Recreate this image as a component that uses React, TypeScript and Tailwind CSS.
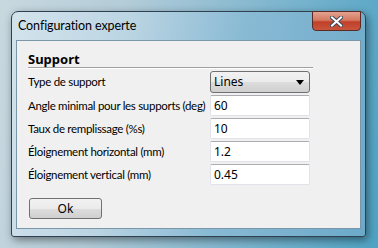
import React from "react";

const font = { fontFamily: '"Noto Sans", "Segoe UI", sans-serif' };
const labelFont = { fontFamily: 'Lato, "Noto Sans", sans-serif' };

function Field({ value }: { value: string }) {
  return (
    <div className="h-[21px] w-[100px] rounded-[2px] border border-[#e2e3ea] border-t-[#abadb3] bg-white pl-[3px] text-[12px] leading-[19px] text-black">
      {value}
    </div>
  );
}

export default function App() {
  const rows: [string, string][] = [
    ["Angle minimal pour les supports (deg)", "60"],
    ["Taux de remplissage (%s)", "10"],
    ["Éloignement horizontal (mm)", "1.2"],
    ["Éloignement vertical (mm)", "0.45"],
  ];
  return (
    <div
      className="h-[248px] w-[378px] overflow-hidden bg-[linear-gradient(100deg,#c9d8df_0%,#b3ccd8_30%,#7fb6cf_65%,#4fa3c4_100%)] pl-[11px] pt-[11px]"
      style={font}
    >
      <div className="relative flex h-[226px] w-[355px] flex-col rounded-t-[7px] rounded-b-[3px] border border-[#2f4150] bg-[linear-gradient(100deg,#d3e3ec_0%,#bcd5e3_30%,#89bad4_60%,#6ca9c9_100%)] px-[4px] pb-[7px] shadow-[2px_3px_8px_rgba(0,0,0,0.45)]">
        <div className="flex h-[28px] items-center pl-[2px] text-[12.5px] tracking-[-0.1px] text-black" style={labelFont}>
          Configuration experte
        </div>
        <div className="absolute right-[4px] top-[-1px] flex h-[20px] w-[49px] items-center justify-center rounded-b-[4px] border border-[#5a2a24] bg-[linear-gradient(180deg,#e3a190_0%,#d47a62_45%,#c2402a_55%,#c8553c_100%)]">
          <svg width="13" height="11" viewBox="0 0 13 11">
            <path
              d="M2 1.5 L11 9.5 M11 1.5 L2 9.5"
              stroke="#3b4a5c"
              strokeWidth="4"
              strokeLinecap="square"
            />
            <path
              d="M2 1.5 L11 9.5 M11 1.5 L2 9.5"
              stroke="#ffffff"
              strokeWidth="2"
              strokeLinecap="square"
            />
          </svg>
        </div>
        <div className="flex flex-1 flex-col border border-[#7a97aa] bg-[#f0f0f0] pl-[11px] pt-[10px]">
          <div className="h-[16px] text-[13px] font-bold leading-[16px] text-black">
            Support
          </div>
          <div className="mb-[2px] h-[2px] w-[285px] border-t border-[#a0a0a0] border-b border-b-white" />
          <div className="flex flex-col gap-[2px]">
            <div className="flex h-[22px] items-center">
              <div className="w-[182px] text-[11.5px] tracking-[-0.3px] text-black" style={labelFont}>Type de support</div>
              <div className="flex h-[22px] w-[100px] items-center justify-between rounded-[3px] border border-[#707070] bg-[linear-gradient(180deg,#f2f2f2_0%,#ebebeb_50%,#dddddd_51%,#cfcfcf_100%)] pl-[3px] pr-[5px] text-[12px] text-black">
                <span>Lines</span>
                <svg width="8" height="5" viewBox="0 0 8 5">
                  <path d="M0 0 L8 0 L4 5 Z" fill="#000" />
                </svg>
              </div>
            </div>
            {rows.map(([label, value]) => (
              <div key={label} className="flex h-[21px] items-center">
                <div className="w-[182px] whitespace-nowrap text-[11.5px] tracking-[-0.3px] text-black" style={labelFont}>
                  {label}
                </div>
                <Field value={value} />
              </div>
            ))}
          </div>
          <div className="ml-[1px] mt-[13px] flex h-[21px] w-[73px] items-center justify-center rounded-[3px] border border-[#707070] bg-[linear-gradient(180deg,#f2f2f2_0%,#ebebeb_50%,#dddddd_51%,#cfcfcf_100%)] text-[12px] text-black">
            Ok
          </div>
        </div>
      </div>
    </div>
  );
}
